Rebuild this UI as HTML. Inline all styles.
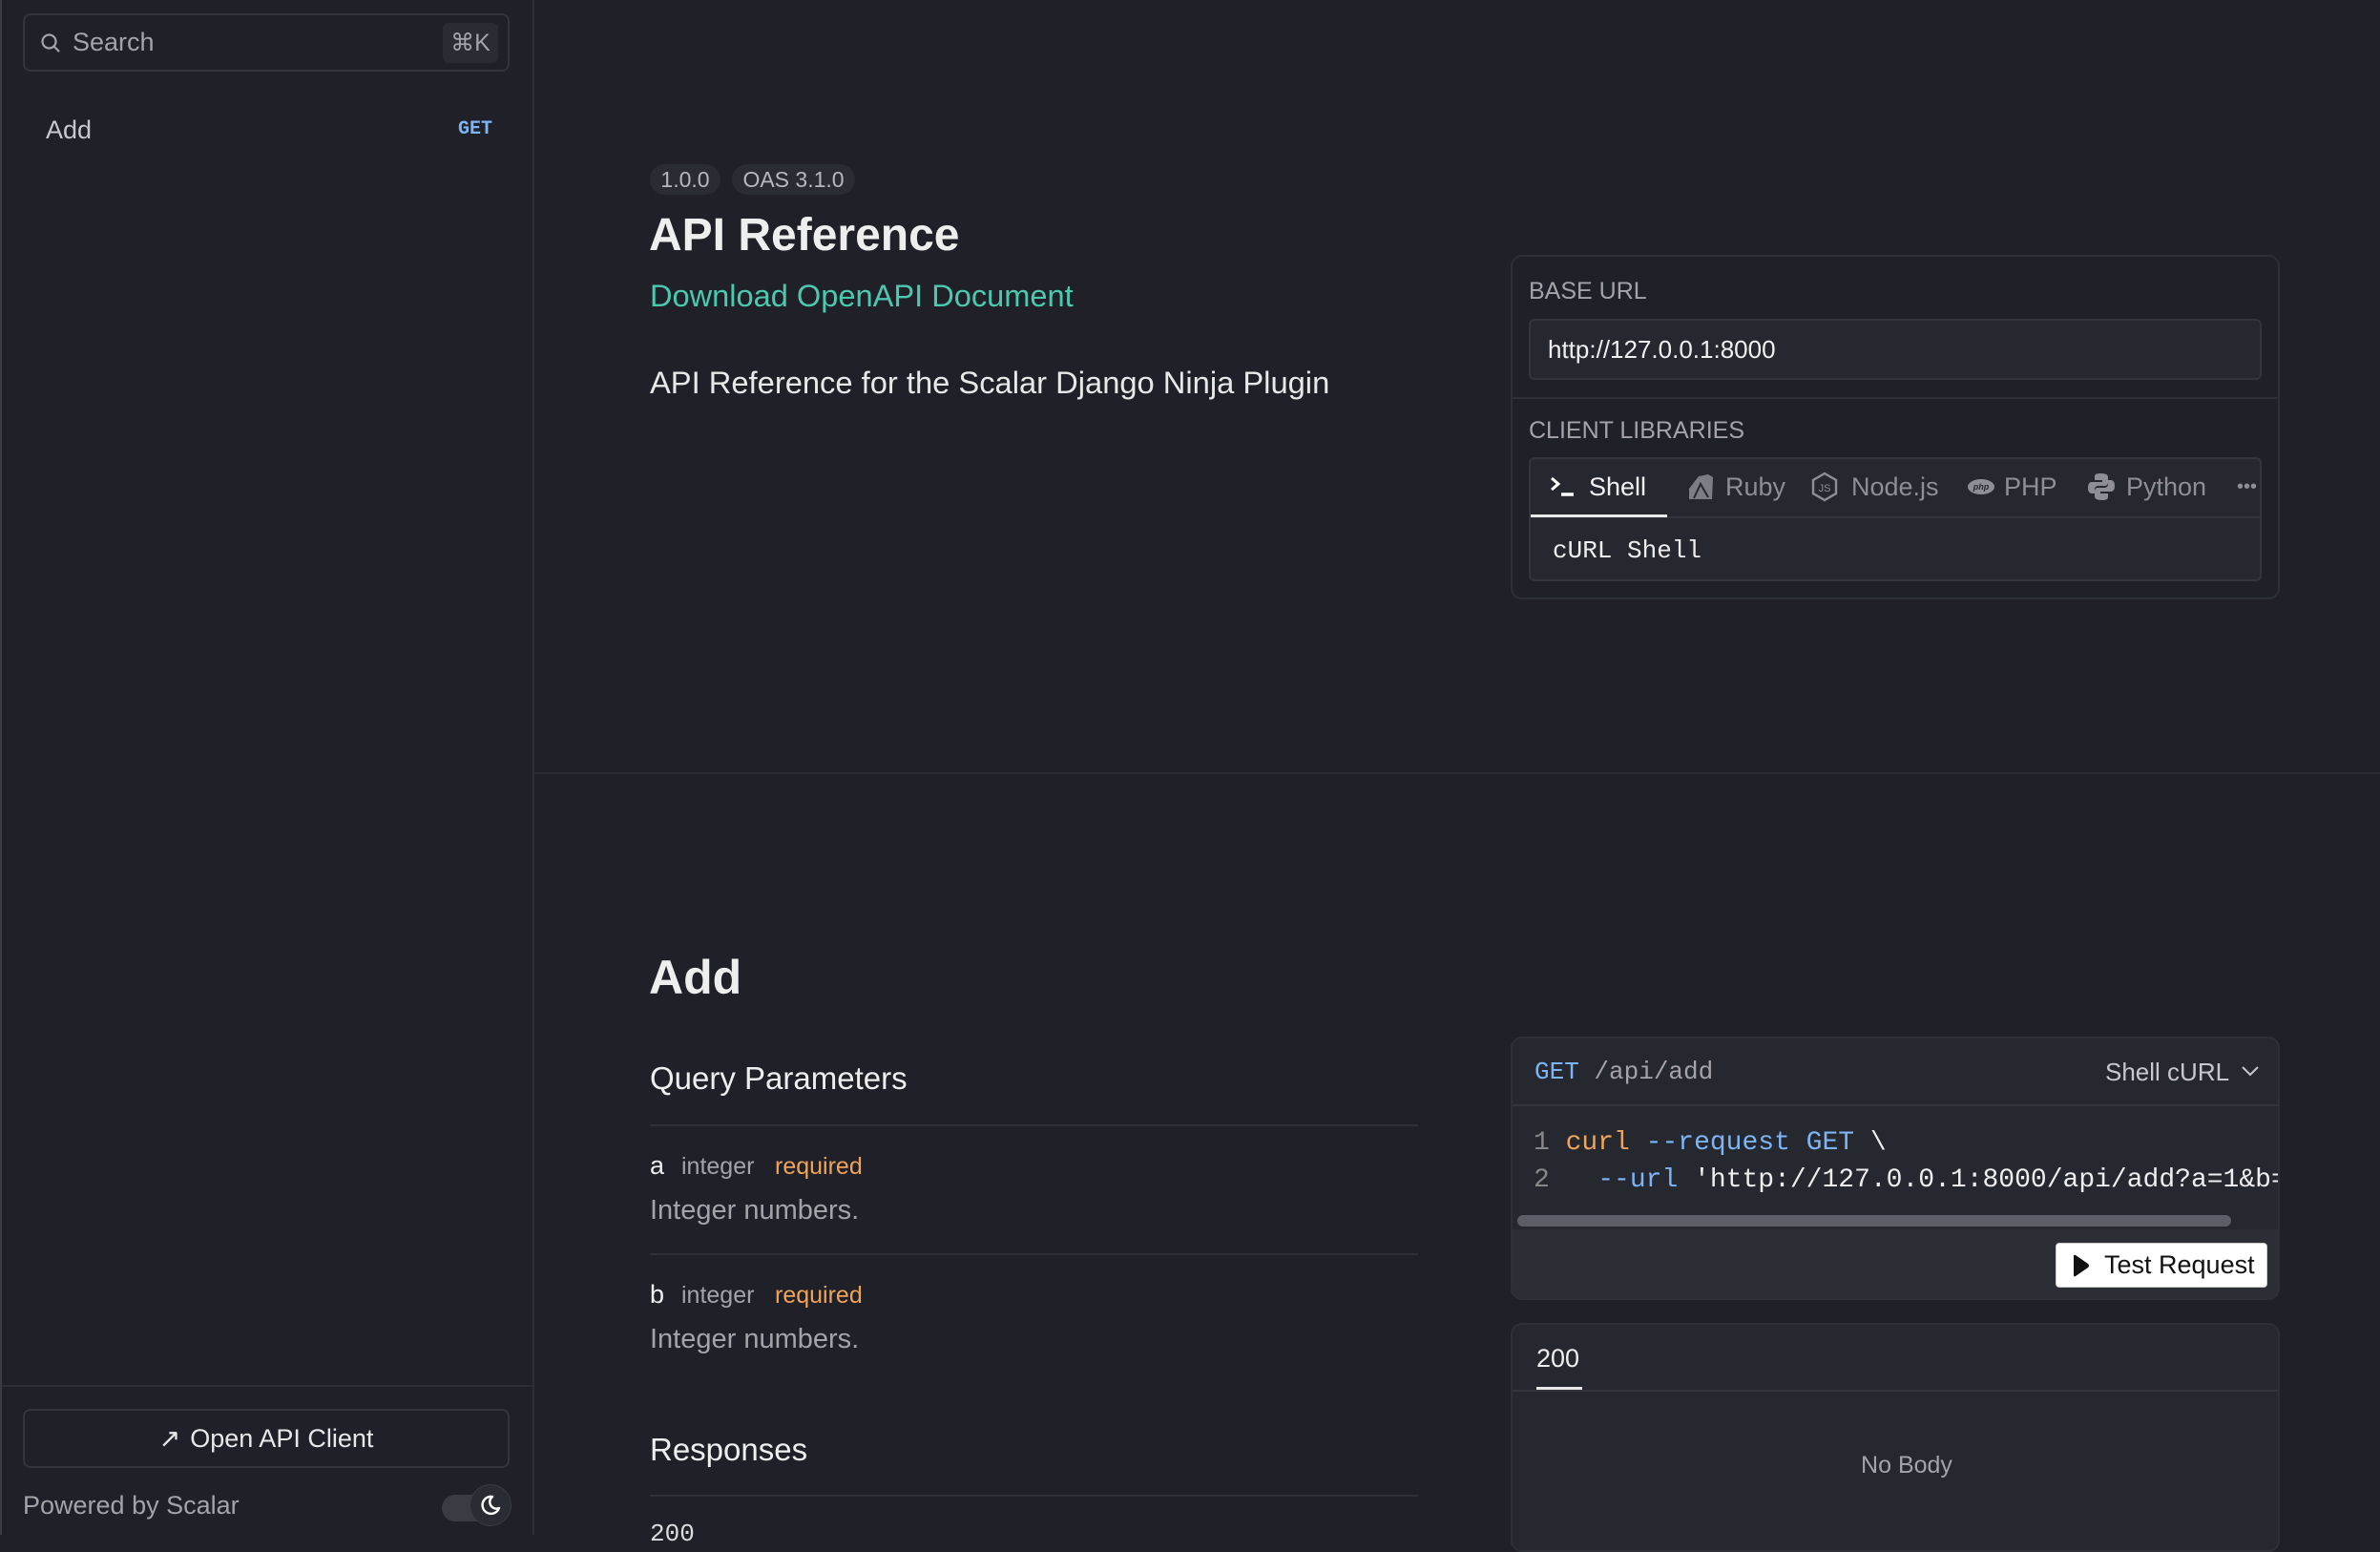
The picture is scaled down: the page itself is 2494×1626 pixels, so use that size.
<!DOCTYPE html>
<html><head><meta charset="utf-8"><style>
*{box-sizing:border-box;margin:0;padding:0}
html,body{width:2494px;height:1608px;overflow:hidden;background:#1f2028;font-family:"Liberation Sans",sans-serif;color:#e8e8e8}
.a{position:absolute;white-space:nowrap}
.mono{font-family:"Liberation Mono",monospace}
.mut{color:#a3a3a8}
</style></head><body>
<!-- sidebar -->
<div class="a" style="left:0;top:0;width:560px;height:1608px;background:#1f2028;border-right:2px solid #2d2f37;border-left:2px solid #3a3c44"></div>
<div class="a" style="left:24px;top:14px;width:510px;height:61px;border:2px solid #33353d;border-radius:8px"></div>
<svg class="a" style="left:42px;top:34px" width="22" height="22" viewBox="0 0 22 22"><circle cx="9.5" cy="9.5" r="7" fill="none" stroke="#a3a3a8" stroke-width="2.2"/><path d="M14.5 14.5L19.5 19.5" stroke="#a3a3a8" stroke-width="2.2" stroke-linecap="round"/></svg>
<div class="a mut" style="left:76px;top:26px;font-size:27px;line-height:36px">Search</div>
<div class="a" style="left:464px;top:24px;width:58px;height:42px;background:#2a2c34;border-radius:6px;color:#a3a3a8;font-size:25px;line-height:42px;text-align:center">⌘K</div>
<div class="a" style="left:48px;top:118px;font-size:27px;line-height:36px;color:#c8c8cc">Add</div>
<div class="a mono" style="left:480px;top:123px;font-size:20px;line-height:26px;color:#7cb4f4;font-weight:bold">GET</div>
<div class="a" style="left:2px;top:1451px;width:556px;height:2px;background:#2d2f37"></div>
<div class="a" style="left:24px;top:1476px;width:510px;height:62px;border:2px solid #33353d;border-radius:8px;font-size:27px;line-height:58px;text-align:center;color:#e8e8e8"><span style="display:inline-block;margin-right:10px;font-size:27px">↗</span>Open API Client</div>
<div class="a mut" style="left:24px;top:1559px;font-size:27px;line-height:36px">Powered by Scalar</div>
<div class="a" style="left:463px;top:1566px;width:60px;height:28px;border-radius:14px;background:#3a3c44"></div>
<div class="a" style="left:492px;top:1555px;width:44px;height:44px;border-radius:22px;background:#2a2c34;border:1px solid #3a3c44"></div>
<svg class="a" style="left:502px;top:1565px" width="24" height="24" viewBox="0 0 24 24"><path d="M14 3A9 9 0 1 0 21 15 7 7 0 0 1 14 3Z" fill="none" stroke="#fff" stroke-width="2.4" stroke-linejoin="round"/></svg>

<!-- intro -->
<div class="a" style="left:681px;top:172px;width:74px;height:32px;border-radius:16px;background:#2a2c34;color:#b8b8bc;font-size:23px;line-height:32px;text-align:center">1.0.0</div>
<div class="a" style="left:767px;top:172px;width:129px;height:32px;border-radius:16px;background:#2a2c34;color:#b8b8bc;font-size:23px;line-height:32px;text-align:center">OAS 3.1.0</div>
<div class="a" style="left:680px;top:218px;font-size:48px;line-height:58px;font-weight:bold;color:#eee">API Reference</div>
<div class="a" style="left:681px;top:290px;font-size:32.6px;line-height:40px;color:#4cc8ae">Download OpenAPI Document</div>
<div class="a" style="left:681px;top:381px;font-size:32.7px;line-height:40px;color:#e8e8e8">API Reference for the Scalar Django Ninja Plugin</div>

<!-- base url card -->
<div class="a" style="left:1583px;top:267px;width:806px;height:361px;border:2px solid #2e3038;border-radius:12px;background:#1f2129"></div>
<div class="a mut" style="left:1602px;top:290px;font-size:25px;line-height:30px">BASE URL</div>
<div class="a" style="left:1602px;top:334px;width:768px;height:64px;border:2px solid #33353d;border-radius:6px;background:#262830;font-size:26px;line-height:60px;padding-left:18px;color:#f0f0f0">http://127.0.0.1:8000</div>
<div class="a" style="left:1585px;top:416px;width:802px;height:2px;background:#2e3038"></div>
<div class="a mut" style="left:1602px;top:436px;font-size:25px;line-height:30px">CLIENT LIBRARIES</div>
<div class="a" style="left:1602px;top:479px;width:768px;height:130px;border:2px solid #33353d;border-radius:6px;background:#262830"></div>
<div class="a" style="left:1604px;top:541px;width:764px;height:2px;background:#33353d"></div>
<div class="a" style="left:1604px;top:539px;width:143px;height:3px;background:#e8e8e8"></div>
<svg class="a" style="left:1622px;top:495px" width="36" height="30" viewBox="0 0 36 30"><path d="M4 6L11 12L4 18" fill="none" stroke="#fff" stroke-width="3"/><path d="M14 23H27" stroke="#fff" stroke-width="3.5"/></svg>
<div class="a" style="left:1665px;top:493px;font-size:27px;line-height:34px;color:#f0f0f0">Shell</div>
<svg class="a" style="left:1768px;top:495px" width="28" height="30" viewBox="0 0 28 30"><path d="M22 2L27 5 26 28 2 28 2 17 12 4Z" fill="#7d7e84"/><path d="M7 27L14 12 22 26" fill="none" stroke="#262830" stroke-width="2"/></svg>
<div class="a" style="left:1808px;top:493px;font-size:27px;line-height:34px;color:#8e8f95">Ruby</div>
<svg class="a" style="left:1898px;top:494px" width="28" height="32" viewBox="0 0 28 32"><path d="M14 2L26 9V23L14 30 2 23V9Z" fill="none" stroke="#8e8f95" stroke-width="2.4"/><text x="14" y="21" font-size="11" text-anchor="middle" fill="#8e8f95" font-family="Liberation Sans">JS</text></svg>
<div class="a" style="left:1940px;top:493px;font-size:27px;line-height:34px;color:#8e8f95">Node.js</div>
<svg class="a" style="left:2061px;top:501px" width="30" height="18" viewBox="0 0 30 18"><ellipse cx="15" cy="9" rx="14" ry="8" fill="#8e8f95"/><text x="15" y="12" font-size="9" text-anchor="middle" fill="#262830" font-style="italic" font-weight="bold" font-family="Liberation Sans">php</text></svg>
<div class="a" style="left:2100px;top:493px;font-size:27px;line-height:34px;color:#8e8f95">PHP</div>
<svg class="a" style="left:2187px;top:494px" width="30" height="32" viewBox="0 0 30 32"><path d="M14 2C8 2 8 4 8 6V9H16V11H5C2 11 1 14 1 17S2 23 5 23H8V19C8 16 10 15 12 15H19C21 15 22 13 22 11V6C22 3 19 2 14 2Z" fill="#8e8f95"/><path d="M16 30C22 30 22 28 22 26V23H14V21H25C28 21 29 18 29 15S28 9 25 9H22V13C22 16 20 17 18 17H11C9 17 8 19 8 21V26C8 29 11 30 16 30Z" fill="#8e8f95"/></svg>
<div class="a" style="left:2228px;top:493px;font-size:27px;line-height:34px;color:#8e8f95">Python</div>
<div class="a" style="left:2344px;top:493px;font-size:20px;line-height:34px;color:#8e8f95">•••</div>
<div class="a mono" style="left:1627px;top:560px;font-size:26px;line-height:34px;color:#eee">cURL Shell</div>

<div class="a" style="left:560px;top:809px;width:1934px;height:2px;background:#2a2c34"></div>

<!-- Add section -->
<div class="a" style="left:680px;top:994px;font-size:50px;line-height:60px;font-weight:bold;color:#eee">Add</div>
<div class="a" style="left:681px;top:1110px;font-size:33px;line-height:40px;color:#eee">Query Parameters</div>
<div class="a" style="left:681px;top:1178px;width:805px;height:2px;background:#2e3038"></div>
<div class="a" style="left:681px;top:1204px;font-size:27px;line-height:34px;color:#eee">a</div>
<div class="a mut" style="left:714px;top:1206px;font-size:25px;line-height:32px">integer</div>
<div class="a" style="left:812px;top:1206px;font-size:25px;line-height:32px;color:#f0a45a">required</div>
<div class="a mut" style="left:681px;top:1250px;font-size:29px;line-height:36px">Integer numbers.</div>
<div class="a" style="left:681px;top:1313px;width:805px;height:2px;background:#2e3038"></div>
<div class="a" style="left:681px;top:1339px;font-size:27px;line-height:34px;color:#eee">b</div>
<div class="a mut" style="left:714px;top:1341px;font-size:25px;line-height:32px">integer</div>
<div class="a" style="left:812px;top:1341px;font-size:25px;line-height:32px;color:#f0a45a">required</div>
<div class="a mut" style="left:681px;top:1385px;font-size:29px;line-height:36px">Integer numbers.</div>
<div class="a" style="left:681px;top:1499px;font-size:33px;line-height:40px;color:#eee">Responses</div>
<div class="a" style="left:681px;top:1566px;width:805px;height:2px;background:#2e3038"></div>
<div class="a mono" style="left:681px;top:1590px;font-size:26px;line-height:34px;color:#ddd">200</div>

<!-- code card -->
<div class="a" style="left:1583px;top:1086px;width:806px;height:276px;border:2px solid #2e3038;border-radius:12px;background:#262830;overflow:hidden">
  <div class="a" style="left:0;top:200px;width:806px;height:80px;background:#2c2e36"></div>
</div>
<div class="a" style="left:1585px;top:1157px;width:802px;height:2px;background:#33353d"></div>
<div class="a mono" style="left:1608px;top:1106px;font-size:26px;line-height:34px;color:#a3a3a8"><span style="color:#7cb4f4">GET</span> /api/add</div>
<div class="a" style="left:2206px;top:1106px;font-size:26px;line-height:34px;color:#c8c8cc">Shell cURL</div>
<svg class="a" style="left:2348px;top:1114px" width="20" height="16" viewBox="0 0 20 16"><path d="M2 4L10 12 18 4" fill="none" stroke="#c8c8cc" stroke-width="2"/></svg>
<div class="a mono" style="left:1607px;top:1178px;width:780px;overflow:hidden;font-size:28px;line-height:39px;color:#eee;white-space:pre"><span style="color:#888">1</span> <span style="color:#f0a45a">curl</span> <span style="color:#7cb4f4">--request GET</span> \
<span style="color:#888">2</span>   <span style="color:#7cb4f4">--url</span> 'http://127.0.0.1:8000/api/add?a=1&amp;b=1'</div>
<div class="a" style="left:1590px;top:1273px;width:748px;height:12px;border-radius:6px;background:#5c5d66"></div>
<div class="a" style="left:2154px;top:1302px;width:222px;height:47px;background:#fff;border-radius:4px;border:1px solid #ccc;color:#111;font-size:27px;line-height:45px;padding-left:50px">Test Request</div>
<svg class="a" style="left:2170px;top:1314px" width="20" height="24" viewBox="0 0 20 24"><path d="M3 2Q3 0 5 1L18 10Q20 12 18 14L5 23Q3 24 3 22Z" fill="#111"/></svg>

<!-- response card -->
<div class="a" style="left:1583px;top:1386px;width:806px;height:240px;border:2px solid #2e3038;border-radius:12px;background:#262830"></div>
<div class="a" style="left:1610px;top:1406px;font-size:27px;line-height:34px;color:#eee">200</div>
<div class="a" style="left:1585px;top:1456px;width:802px;height:2px;background:#33353d"></div>
<div class="a" style="left:1610px;top:1453px;width:48px;height:3px;background:#e8e8e8"></div>
<div class="a mut" style="left:1898px;top:1519px;width:200px;text-align:center;font-size:25px;line-height:32px">No Body</div>
</body></html>
